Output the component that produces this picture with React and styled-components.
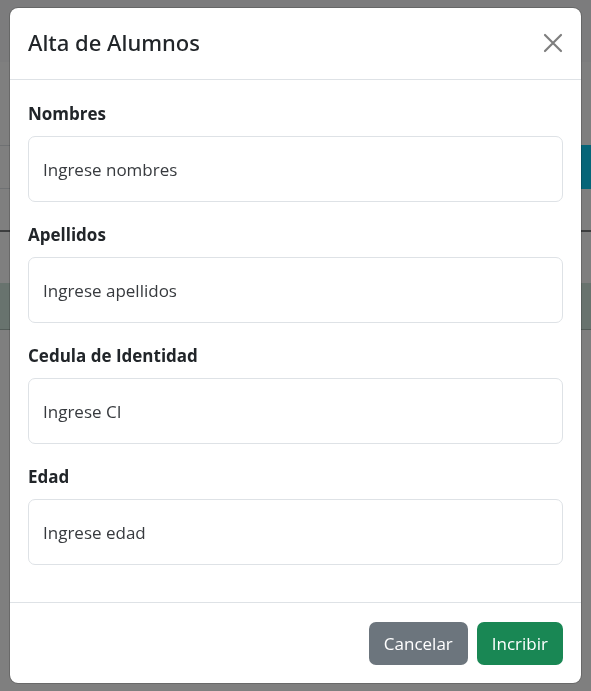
import React from "react";
import styled, { createGlobalStyle } from "styled-components";

const GlobalStyle = createGlobalStyle`
  *, *::before, *::after { box-sizing: border-box; }
  body {
    margin: 0;
    overflow: hidden;
    background: #fff;
    color: #212529;
    font-family: "Segoe UI", "Open Sans", "Noto Sans", sans-serif;
    font-size: 17px;
    line-height: 27px;
  }
`;

const Page = styled.div`
  min-height: 100vh;
`;

const Navbar = styled.div`
  height: 62px;
  background: #f8f9fa;
`;

const Toolbar = styled.div`
  display: flex;
  justify-content: flex-end;
  height: 44px;
  margin-top: 83px;
  border: solid #dee2e6;
  border-width: 1px 0;
`;

const ToolbarAccent = styled.div`
  width: 60px;
  margin: -1px 0;
  background: #0dcaf0;
`;

const TableHead = styled.div`
  height: 43px;
  border-bottom: 2px solid #7a7c7f;
`;

const TableRow = styled.div`
  height: ${({ $success }) => ($success ? 47 : 51)}px;
  background: ${({ $success }) => ($success ? "#d1e7dd" : "#fff")};
  border-bottom: ${({ $success }) => ($success ? "1px solid #a7b9b1" : "none")};
`;

const Backdrop = styled.div`
  position: fixed;
  inset: 0;
  overflow-y: auto;
  padding: 7px 9px;
  background: rgba(0, 0, 0, 0.5);
`;

const Dialog = styled.form`
  display: flex;
  flex-direction: column;
  background: #fff;
  background-clip: padding-box;
  border: 1px solid rgba(0, 0, 0, 0.175);
  border-radius: 9px;
`;

const Header = styled.header`
  display: flex;
  align-items: center;
  justify-content: space-between;
  padding: 17px 18px 19px;
  border-bottom: 1px solid #dee2e6;
`;

const Title = styled.h1`
  margin: 0;
  font-family: "Segoe UI", "Noto Sans", sans-serif;
  font-size: 22px;
  font-weight: 500;
  line-height: 35px;
`;

const CloseButton = styled.button`
  display: flex;
  padding: 0;
  border: 0;
  background: none;
  color: #000;
  opacity: 0.5;
  cursor: pointer;
`;

const Body = styled.div`
  display: flex;
  flex-direction: column;
  gap: 19px;
  padding: 20px 18px 37px;
`;

const Field = styled.div`
  display: flex;
  flex-direction: column;
  gap: 9px;
`;

const Label = styled.label`
  font-weight: 700;
`;

const Input = styled.input`
  width: 100%;
  height: 66px;
  padding: 0 14px;
  border: 1px solid #dee2e6;
  border-radius: 7px;
  background: #fff;
  color: #212529;
  font: inherit;

  &::placeholder {
    color: rgba(33, 37, 41, 0.9);
    opacity: 1;
  }
`;

const Footer = styled.footer`
  display: flex;
  justify-content: flex-end;
  gap: 9px;
  padding: 19px 18px 18px;
  border-top: 1px solid #dee2e6;
`;

const Button = styled.button`
  padding: 8px 15px;
  border: 0;
  border-radius: 7px;
  background: ${({ $variant }) => ($variant === "success" ? "#198754" : "#6c757d")};
  color: #fff;
  font: inherit;
  cursor: pointer;
`;

const fields = [
  { id: "nombres", label: "Nombres", placeholder: "Ingrese nombres" },
  { id: "apellidos", label: "Apellidos", placeholder: "Ingrese apellidos" },
  { id: "cedula", label: "Cedula de Identidad", placeholder: "Ingrese CI" },
  { id: "edad", label: "Edad", placeholder: "Ingrese edad" },
];

export default function App() {
  return (
    <>
      <GlobalStyle />
      <Page aria-hidden="true">
        <Navbar />
        <Toolbar>
          <ToolbarAccent />
        </Toolbar>
        <TableHead />
        <TableRow />
        <TableRow $success />
      </Page>
      <Backdrop>
        <Dialog
          role="dialog"
          aria-modal="true"
          aria-labelledby="dialog-title"
          onSubmit={(event) => event.preventDefault()}
        >
          <Header>
            <Title id="dialog-title">Alta de Alumnos</Title>
            <CloseButton type="button" aria-label="Cerrar">
              <svg width="20" height="20" viewBox="0 0 20 20" fill="none">
                <path
                  d="M2 2 18 18M18 2 2 18"
                  stroke="currentColor"
                  strokeWidth="2.2"
                  strokeLinecap="round"
                />
              </svg>
            </CloseButton>
          </Header>
          <Body>
            {fields.map(({ id, label, placeholder }) => (
              <Field key={id}>
                <Label htmlFor={id}>{label}</Label>
                <Input id={id} name={id} type="text" placeholder={placeholder} />
              </Field>
            ))}
          </Body>
          <Footer>
            <Button type="button">Cancelar</Button>
            <Button type="submit" $variant="success">
              Incribir
            </Button>
          </Footer>
        </Dialog>
      </Backdrop>
    </>
  );
}
